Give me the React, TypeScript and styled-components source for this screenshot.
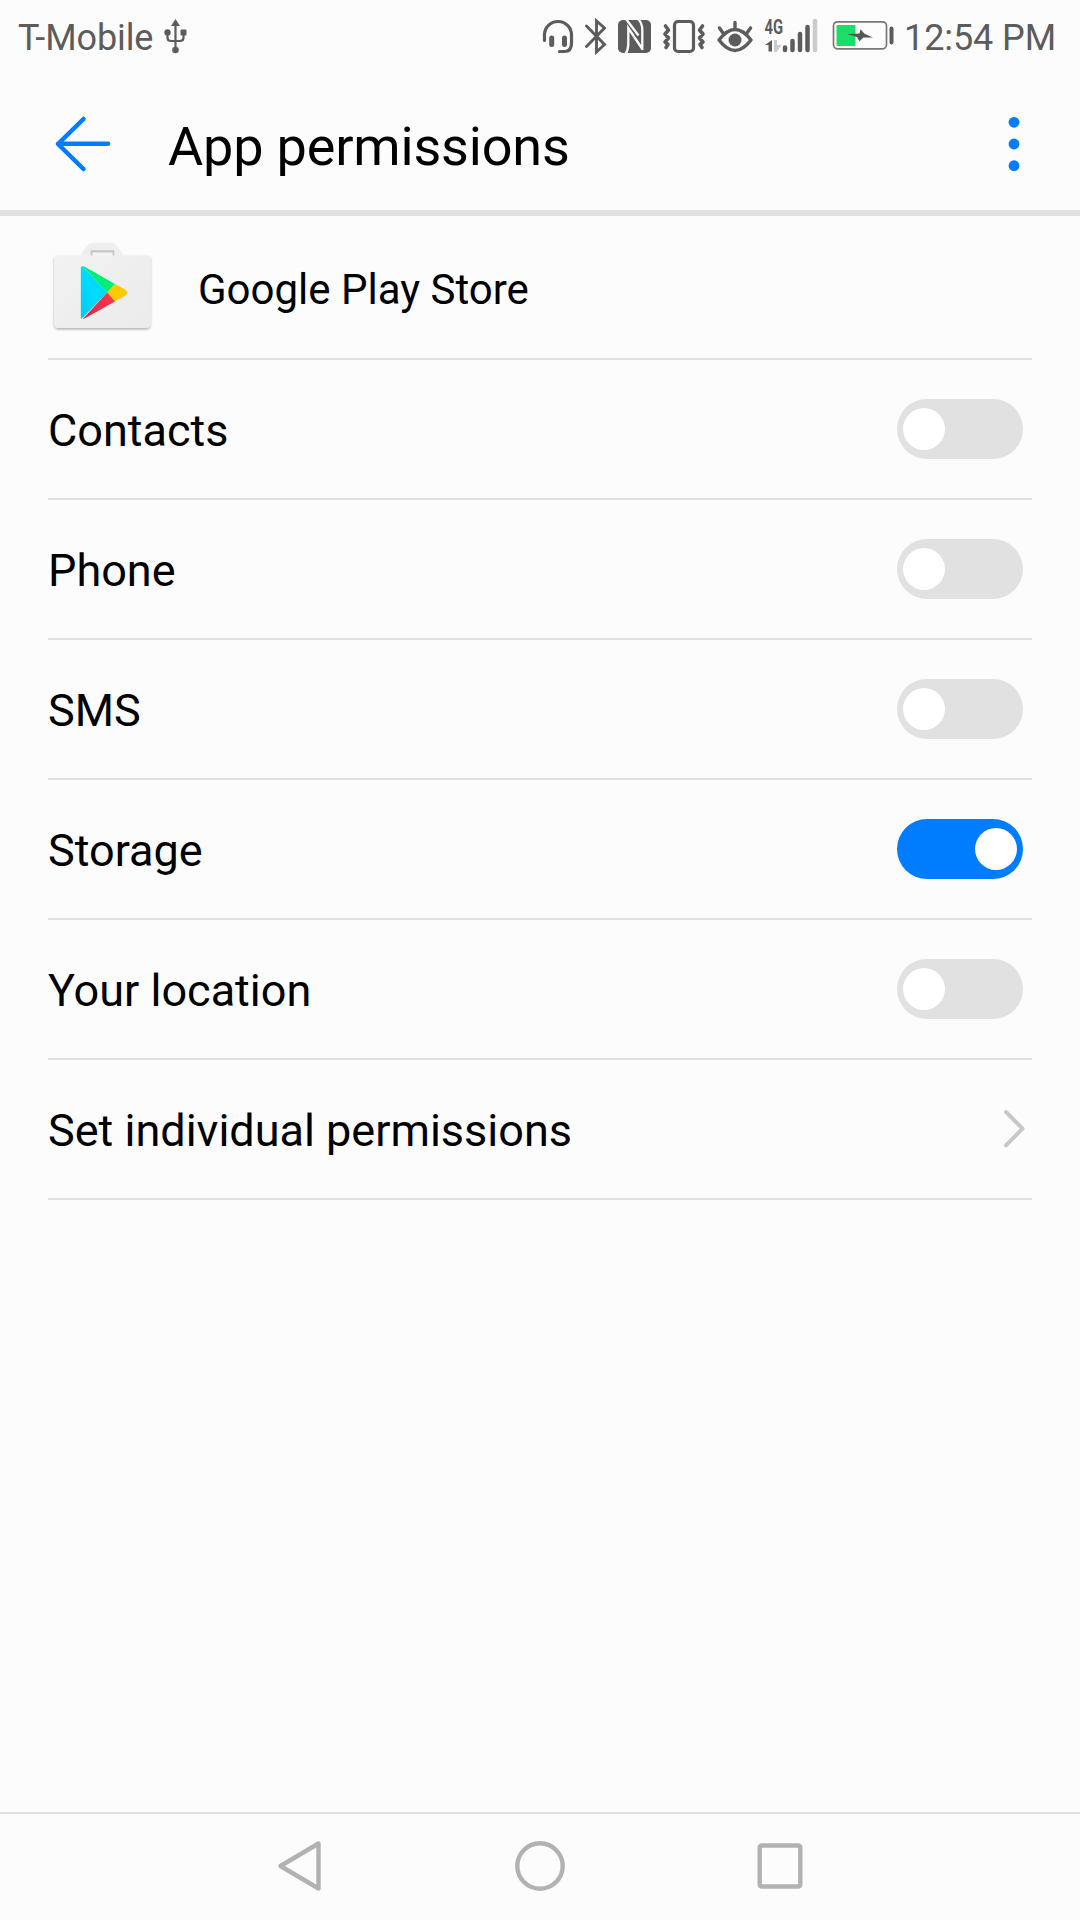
import React from "react";
import styled, { createGlobalStyle } from "styled-components";

const GlobalStyle = createGlobalStyle`
  * { box-sizing: border-box; }
  html, body { margin: 0; padding: 0; background: #fcfcfc; }
  body { font-family: Roboto, "Liberation Sans", sans-serif; color: #000; }
`;

const Screen = styled.div`
  width: 1080px;
  height: 1920px;
  display: flex;
  flex-direction: column;
  background: #fcfcfc;
  overflow: hidden;
`;

const StatusBar = styled.div`
  height: 72px;
  flex: none;
  display: flex;
  justify-content: space-between;
  padding: 0 24px 0 18px;
  color: #5c5c5c;
`;

const StatusGroup = styled.div`
  display: flex;
  align-items: flex-start;
  height: 72px;
`;

const StatusText = styled.span<{ $start?: number }>`
  font-size: 36px;
  line-height: 42px;
  padding-top: 17px;
  margin-left: ${(p) => p.$start ?? 0}px;
  letter-spacing: -0.1px;
  white-space: nowrap;
`;

const Glyph = styled.svg<{ $gap?: number }>`
  display: block;
  flex: none;
  margin-left: ${(p) => p.$gap ?? 0}px;
`;

const Toolbar = styled.header`
  height: 144px;
  flex: none;
  display: flex;
  align-items: center;
  padding: 6px 60px 0 50px;
  border-bottom: 6px solid #e1e1e1;
`;

const IconButton = styled.button`
  display: flex;
  padding: 0;
  border: 0;
  background: none;
`;

const Title = styled.h1`
  flex: 1;
  margin: 6px 0 0 54px;
  font-size: 54px;
  font-weight: 400;
  line-height: 64px;
  letter-spacing: -0.18px;
`;

const List = styled.main`
  flex: 1;
  padding: 0 48px;
`;

const Row = styled.div<{ $height?: number }>`
  height: ${(p) => p.$height ?? 140}px;
  display: flex;
  align-items: center;
  justify-content: space-between;
  border-bottom: 2px solid #e1e1e1;
`;

const AppRow = styled(Row)`
  justify-content: flex-start;
`;

const AppName = styled.span`
  margin: 6px 0 0 45px;
  font-size: 42px;
  line-height: 50px;
`;

const Label = styled.span`
  margin-top: 4px;
  font-size: 45px;
  line-height: 54px;
`;

const Switch = styled.button<{ $on: boolean }>`
  width: 126px;
  height: 60px;
  margin-right: 9px;
  padding: 0 6px;
  border: 0;
  border-radius: 30px;
  display: flex;
  align-items: center;
  justify-content: ${(p) => (p.$on ? "flex-end" : "flex-start")};
  background: ${(p) => (p.$on ? "#007dff" : "#e1e1e1")};
`;

const Knob = styled.span`
  width: 42px;
  height: 42px;
  border-radius: 50%;
  background: #fff;
`;

const NavBar = styled.nav`
  height: 108px;
  flex: none;
  display: flex;
  justify-content: center;
  align-items: center;
  gap: 180px;
  padding-bottom: 2px;
  border-top: 2px solid #e1e1e1;
`;

const permissions = [
  { name: "Contacts", on: false },
  { name: "Phone", on: false },
  { name: "SMS", on: false },
  { name: "Storage", on: true },
  { name: "Your location", on: false },
];

const ink = "#5c5c5c";

const UsbIcon = () => (
  <Glyph $gap={11} width="24" height="60" viewBox="164 0 24 60" fill={ink}>
    <path d="M175.500 19l4.500 7h-9z" />
    <path d="M175.500 24v24M167.500 34v3.500q0 3.500 3.500 3.500h9q3.500 0 3.500-3.500v-4" fill="none" stroke={ink} strokeWidth="2.200" />
    <circle cx="167.500" cy="32.500" r="3.200" />
    <rect x="180.500" y="29.500" width="6" height="6" rx="1" />
    <circle cx="175.500" cy="50" r="3.300" />
  </Glyph>
);

const StatusIcons = () => (
  <Glyph width="360" height="72" viewBox="540 0 360 72" fill="none" stroke={ink} strokeLinecap="round" strokeLinejoin="round">
    {/* headset */}
    <path d="M544.500 40.500V35a13.500 13.500 0 0 1 27 0v8q0 8.500-7 8.500h-5" strokeWidth="3.200" />
    <path d="M551.700 38v6.500M564.500 38v6.500" strokeWidth="5" />
    {/* bluetooth */}
    <path d="M586.500 26l18 18.500-8 7.500V21l8 7-18 18.500" strokeWidth="2.900" strokeLinejoin="miter" />
    {/* nfc */}
    <rect x="618" y="20" width="33" height="33" rx="5" fill={ink} stroke="none" />
    <path d="M625.500 54Q628.300 50 628.300 44V28L642 48.500M626 19L638.500 35.500M638 19Q642.300 23 642.300 30V50" stroke="#fcfcfc" strokeWidth="2.300" strokeLinecap="butt" strokeLinejoin="miter" />
    {/* vibrate */}
    <rect x="674.500" y="21.500" width="19" height="30" rx="3.500" strokeWidth="3.200" />
    <path d="M665.500 26l3 4-3.500 4 3.500 4-3.500 4 3 2.500-2 3M702.500 26l-3 4 3.500 4-3.500 4 3.500 4-3 2.500 2 3" strokeWidth="3.600" />
    {/* eye */}
    <path d="M719 40q16-21 32 0q-16 21-32 0z" strokeWidth="3.400" />
    <circle cx="735" cy="40" r="6.500" fill={ink} stroke="none" />
    <path d="M735 22.500v6M719.500 28l3.500 5M750.500 28l-3.500 5" strokeWidth="3.400" />
    {/* data arrows */}
    <path d="M772 40v11.500h-3.500V45H765z" fill={ink} stroke="none" />
    <path d="M774 40v12h2.500l5-7h-4.500v-5z" fill="#cbcbcb" stroke="none" />
    {/* signal bars */}
    <path d="M785 47.500v2.500M792.500 41v9M800 34v16M807.500 27v23" strokeWidth="4.500" />
    <path d="M815 21v29" strokeWidth="4.500" stroke="#cbcbcb" />
    <text x="764.500" y="33.500" fontFamily="Roboto, sans-serif" fontSize="19.500" fontWeight="700" textLength="18.500" lengthAdjust="spacingAndGlyphs" fill={ink} stroke="none">4G</text>
    {/* battery */}
    <rect x="833.500" y="21.800" width="53" height="27" rx="4" strokeWidth="1.700" stroke="#777" />
    <rect x="836.500" y="25" width="19" height="21" rx="1" fill="#1ddc68" stroke="none" />
    <path d="M847 34L859.500 33.500L860.500 29.300L864.500 33.800L873 37.500L863.500 37.500L859.500 41.300L857 37Z" fill="#4f5951" stroke="none" />
    <path d="M891.500 28.500v14" strokeWidth="4" />
  </Glyph>
);

const BackIcon = () => (
  <svg width="64" height="60" viewBox="50 114 64 60" fill="none" stroke="#007dff" strokeWidth="4.500" strokeLinecap="round" strokeLinejoin="round">
    <path d="M83.500 119L58 144L83.500 169M58 143.700H108" />
  </svg>
);

const MoreIcon = () => (
  <svg width="12" height="60" viewBox="1008 114 12 60" fill="#007dff">
    <circle cx="1014" cy="122.300" r="5.400" />
    <circle cx="1014" cy="144" r="5.400" />
    <circle cx="1014" cy="165.700" r="5.400" />
  </svg>
);

const PlayStoreIcon = () => (
  <svg width="105" height="96" viewBox="48 239 105 96">
    <defs>
      <linearGradient id="bag" x1="0" y1="0" x2="1" y2="1">
        <stop offset="0" stopColor="#f2f2f2" />
        <stop offset="1" stopColor="#ebebeb" />
      </linearGradient>
      <linearGradient id="cyan" x1="1" y1="0" x2="0" y2="1">
        <stop offset="0" stopColor="#00c8ff" />
        <stop offset="0.500" stopColor="#00dcff" />
        <stop offset="1" stopColor="#00c8f5" />
      </linearGradient>
      <linearGradient id="red" x1="1" y1="0" x2="0" y2="1">
        <stop offset="0" stopColor="#ff3a44" />
        <stop offset="1" stopColor="#d32450" />
      </linearGradient>
      <filter id="shade" x="-10%" y="-10%" width="120%" height="125%">
        <feDropShadow dx="0" dy="1.500" stdDeviation="1.200" floodColor="#000" floodOpacity="0.300" />
      </filter>
      <clipPath id="play">
        <path d="M81 267.500Q81 263.500 85 265.700L125.500 288.500Q129.500 291.500 125.500 295L85 317.500Q81 319 81 315z" />
      </clipPath>
    </defs>
    <g filter="url(#shade)">
      <path fillRule="evenodd" d="M82.500 257v-4q0-1 1-1.500l5-6.500q2-2.300 4-2.300h19q2 0 4 2.300l5 6.500q1 1 1 2v3.500zM91.500 250.500v5h22v-5z" fill="#eee" />
      <path d="M56 255.500h92.500q2 0 2 2V323q0 5-5 5H59q-5 0-5-5V257.500q0-2 2-2z" fill="url(#bag)" />
    </g>
    <path d="M91.500 255.500v-4.500h22v4.500" fill="none" stroke="#c8c8c8" strokeWidth="1.600" />
    <g clipPath="url(#play)" transform="translate(-0.400 1)">
      <path d="M80 262v58l27.500-28.500z" fill="url(#cyan)" />
      <path d="M80 262l27.500 29.500 8-8.500-35-21z" fill="#00ee76" />
      <path d="M107.500 291.500l8-8.500 16 8.500-16 9z" fill="#ffc900" />
      <path d="M107.500 291.500l8 9-34.500 20z" fill="url(#red)" />
    </g>
  </svg>
);

const Chevron = () => (
  <Glyph width="30" height="48" viewBox="1002 1105 30 48" fill="none" stroke="#c8c8c8" strokeWidth="4" strokeLinecap="round" strokeLinejoin="round">
    <path d="M1006 1112l16.500 16.700-16.500 16.700" />
  </Glyph>
);

const NavIcon = ({ children }: { children: React.ReactNode }) => (
  <svg width="60" height="60" viewBox="0 0 60 60" fill="none" stroke="#b2b2b2" strokeWidth="4.400" strokeLinejoin="round">
    {children}
  </svg>
);

export default function App() {
  return (
    <>
      <GlobalStyle />
      <Screen>
        <StatusBar>
          <StatusGroup>
            <StatusText>T-Mobile</StatusText>
            <UsbIcon />
          </StatusGroup>
          <StatusGroup>
            <StatusIcons />
            <StatusText $start={4}>12:54 PM</StatusText>
          </StatusGroup>
        </StatusBar>
        <Toolbar>
          <IconButton aria-label="Back"><BackIcon /></IconButton>
          <Title>App permissions</Title>
          <IconButton aria-label="More"><MoreIcon /></IconButton>
        </Toolbar>
        <List>
          <AppRow $height={144}>
            <PlayStoreIcon />
            <AppName>Google Play Store</AppName>
          </AppRow>
          {permissions.map((p) => (
            <Row key={p.name}>
              <Label>{p.name}</Label>
              <Switch $on={p.on} role="switch" aria-checked={p.on} aria-label={p.name}>
                <Knob />
              </Switch>
            </Row>
          ))}
          <Row>
            <Label>Set individual permissions</Label>
            <Chevron />
          </Row>
        </List>
        <NavBar>
          <NavIcon><path d="M10.500 30L48.500 7.500V52.500Z" /></NavIcon>
          <NavIcon><circle cx="30" cy="30" r="22.700" /></NavIcon>
          <NavIcon><rect x="9.700" y="9.500" width="40.600" height="41" rx="2" /></NavIcon>
        </NavBar>
      </Screen>
    </>
  );
}
